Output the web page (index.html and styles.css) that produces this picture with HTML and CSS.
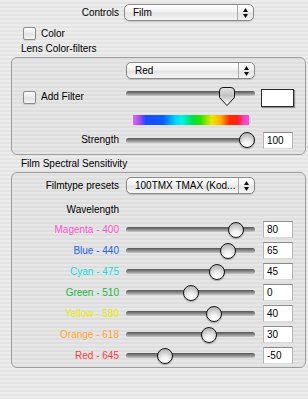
FILE: index.html
```html
<!DOCTYPE html>
<html>
<head>
<meta charset="utf-8">
<title>Film Controls</title>
<link rel="stylesheet" href="styles.css">
</head>
<body>
<div class="panel">
    <div class="row top">
        <span class="lbl">Controls</span>
        <div class="popup">Film<span class="arrows"><svg width="5" height="10" viewBox="0 0 5 10"><path d="M2.5 0 L5 4 H0 Z M0 6 H5 L2.5 10 Z" fill="#111"/></svg></span></div>
    </div>
    <div class="check color"><span class="box"></span>Color</div>
    <div class="title">Lens Color-filters</div>
    <div class="group lens">
        <div class="row first">
            <span class="lbl"></span>
            <div class="popup">Red<span class="arrows"><svg width="5" height="10" viewBox="0 0 5 10"><path d="M2.5 0 L5 4 H0 Z M0 6 H5 L2.5 10 Z" fill="#111"/></svg></span></div>
        </div>
        <div class="row filter">
            <div class="lbl check"><span class="box"></span>Add Filter</div>
            <div class="slider">
                <div class="track"></div>
                <svg class="pointer" style="left:92px" width="18" height="20" viewBox="0 0 18 20">
                    <defs>
                        <linearGradient id="pg" x1="0" y1="0" x2="0" y2="1">
                            <stop offset="0" stop-color="#e4e4e4"/>
                            <stop offset="0.45" stop-color="#c2c2c2"/>
                            <stop offset="1" stop-color="#ffffff"/>
                        </linearGradient>
                    </defs>
                    <path d="M1.5 4 Q1.5 0.5 5 0.5 H13 Q16.5 0.5 16.5 4 V10.5 L9 18.5 L1.5 10.5 Z" fill="url(#pg)" stroke="#151515"/>
                </svg>
            </div>
            <div class="swatch"></div>
        </div>
        <div class="row spec">
            <span class="lbl"></span>
            <div class="spectrum"></div>
        </div>
        <div class="row strength">
            <span class="lbl">Strength</span>
            <div class="slider"><div class="track"></div><span class="knob" style="--p:1"></span></div>
            <div class="field">100</div>
        </div>
    </div>
    <div class="title">Film Spectral Sensitivity</div>
    <div class="group film">
        <div class="row first">
            <span class="lbl">Filmtype presets</span>
            <div class="popup">100TMX TMAX (Kod...<span class="arrows"><svg width="5" height="10" viewBox="0 0 5 10"><path d="M2.5 0 L5 4 H0 Z M0 6 H5 L2.5 10 Z" fill="#111"/></svg></span></div>
        </div>
        <div class="row wave">
            <span class="lbl">Wavelength</span>
        </div>
        <div class="row band">
            <span class="lbl magenta">Magenta - 400</span>
            <div class="slider"><div class="track"></div><span class="knob" style="--p:.9"></span></div>
            <div class="field">80</div>
        </div>
        <div class="row band">
            <span class="lbl blue">Blue - 440</span>
            <div class="slider"><div class="track"></div><span class="knob" style="--p:.83"></span></div>
            <div class="field">65</div>
        </div>
        <div class="row band">
            <span class="lbl cyan">Cyan - 475</span>
            <div class="slider"><div class="track"></div><span class="knob" style="--p:.735"></span></div>
            <div class="field">45</div>
        </div>
        <div class="row band">
            <span class="lbl green">Green - 510</span>
            <div class="slider"><div class="track"></div><span class="knob" style="--p:.505"></span></div>
            <div class="field">0</div>
        </div>
        <div class="row band">
            <span class="lbl yellow">Yellow - 580</span>
            <div class="slider"><div class="track"></div><span class="knob" style="--p:.71"></span></div>
            <div class="field">40</div>
        </div>
        <div class="row band">
            <span class="lbl orange">Orange - 618</span>
            <div class="slider"><div class="track"></div><span class="knob" style="--p:.665"></span></div>
            <div class="field">30</div>
        </div>
        <div class="row band">
            <span class="lbl red">Red - 645</span>
            <div class="slider"><div class="track"></div><span class="knob" style="--p:.275"></span></div>
            <div class="field">-50</div>
        </div>
    </div>
</div>
</body>
</html>
```

FILE: styles.css
```css
body{
    margin: 0;
    font-family: "Liberation Sans", Arial, sans-serif;
    font-size: 10px;
    color: #000;
}
.panel{
    width: 308px;
    height: 399px;
    box-sizing: border-box;
    padding-top: 4px;
    overflow: hidden;
    background: repeating-linear-gradient(to bottom, #ececec 0px, #ececec 2px, #e4e4e4 2px, #e4e4e4 4px);
}
.row{
    display: flex;
    align-items: center;
}
.lbl{
    flex: none;
    text-align: right;
    line-height: 12px;
    white-space: nowrap;
}
.top{
    height: 17px;
}
.top .lbl{
    width: 119px;
    margin-right: 5px;
}
.popup{
    position: relative;
    flex: none;
    box-sizing: border-box;
    width: 130px;
    height: 17px;
    line-height: 15px;
    padding-left: 8px;
    border: 1px solid #8a8a8a;
    border-radius: 5px;
    background: linear-gradient(#fefefe, #f2f2f2 45%, #e3e3e3 55%, #f6f6f6);
    box-shadow: 0 1px 1px rgba(0, 0, 0, 0.15);
}
.arrows{
    position: absolute;
    top: 0;
    right: 0;
    bottom: 0;
    width: 15px;
    border-left: 1px solid #a9a9a9;
    display: flex;
    align-items: center;
    justify-content: center;
}
.check{
    display: flex;
    align-items: center;
    height: 13px;
}
.box{
    flex: none;
    width: 13px;
    height: 13px;
    box-sizing: border-box;
    margin-right: 5px;
    border: 1px solid #8c8c8c;
    border-radius: 2px;
    background: linear-gradient(#ffffff, #e4e4e4 55%, #f3f3f3);
    box-shadow: 0 1px 1px rgba(0, 0, 0, 0.12);
}
.color{
    margin-top: 6px;
    padding-left: 23px;
}
.title{
    margin-top: 3px;
    padding-left: 21px;
    line-height: 12px;
}
.group{
    margin: 2px 0 0 11px;
    width: 295px;
    box-sizing: border-box;
    border: 1px solid #9d9d9d;
    border-radius: 6px;
    background: rgba(0, 0, 0, 0.025);
    display: flex;
    flex-direction: column;
}
.group .lbl{
    width: 107px;
    margin-right: 7px;
}
.group .popup{
    width: 129px;
}
.lens{
    padding-bottom: 5px;
}
.film{
    padding-bottom: 3px;
}
.first{
    margin-top: 4px;
    height: 17px;
}
.filter{
    margin-top: 8px;
    height: 20px;
}
.filter .lbl{
    box-sizing: border-box;
    padding-left: 11px;
    height: 13px;
    text-align: left;
}
.filter .slider{
    height: 20px;
    align-items: flex-start;
}
.filter .track{
    margin-top: 4px;
}
.pointer{
    position: absolute;
    top: 0;
}
.swatch{
    flex: none;
    align-self: flex-end;
    margin-left: 6px;
    width: 33px;
    height: 18px;
    box-sizing: border-box;
    border: 1px solid #2a2a2a;
    background: #fff;
    box-shadow: 1px 1px 1px rgba(0, 0, 0, 0.35);
}
.spec{
    margin-top: 8px;
    height: 10px;
}
.spectrum{
    margin-left: 7px;
    width: 116px;
    height: 10px;
    background: linear-gradient(to right, #e466f0 0%, #9a4cf4 6%, #1a4cff 11%, #0a5cff 26%, #00d8f8 37%, #00f0e8 42%, #00e040 52%, #28e000 58%, #f0e800 68%, #ffa800 76%, #ff2a00 83%, #ff2410 90%, #ff40c8 96%, #ff50d0 100%);
}
.strength{
    margin-top: 6px;
    height: 18px;
}
.wave{
    margin-top: 10px;
    height: 12px;
}
.band{
    margin-top: 4px;
    height: 17px;
}
.wave + .band{
    margin-top: 5px;
}
.slider{
    position: relative;
    flex: none;
    width: 129px;
    height: 17px;
    display: flex;
    align-items: center;
}
.track{
    width: 100%;
    height: 5px;
    border-radius: 3px;
    background: linear-gradient(#545454, #8a8a8a 50%, #c6c6c6);
}
.knob{
    position: absolute;
    top: 50%;
    left: calc(var(--p) * 113px);
    width: 16px;
    height: 16px;
    margin-top: -8px;
    box-sizing: border-box;
    border: 1px solid #151515;
    border-radius: 50%;
    background: radial-gradient(circle at 50% 85%, #ffffff 0%, #f2f2f2 30%, #c4c4c4 70%, #9c9c9c 100%);
    box-shadow: 0 1px 1px rgba(0, 0, 0, 0.3);
}
.field{
    flex: none;
    margin-left: 8px;
    width: 30px;
    height: 17px;
    box-sizing: border-box;
    padding-left: 3px;
    line-height: 15px;
    background: #fff;
    border: 1px solid #b4b4b4;
    border-top-color: #8a8a8a;
    border-bottom-color: #dadada;
}
.magenta{ color: #ff55cc; }
.blue{ color: #2060ff; }
.cyan{ color: #10dede; }
.green{ color: #20b840; }
.yellow{ color: #eaea00; }
.orange{ color: #ffa830; }
.red{ color: #ff3a3a; }
```
